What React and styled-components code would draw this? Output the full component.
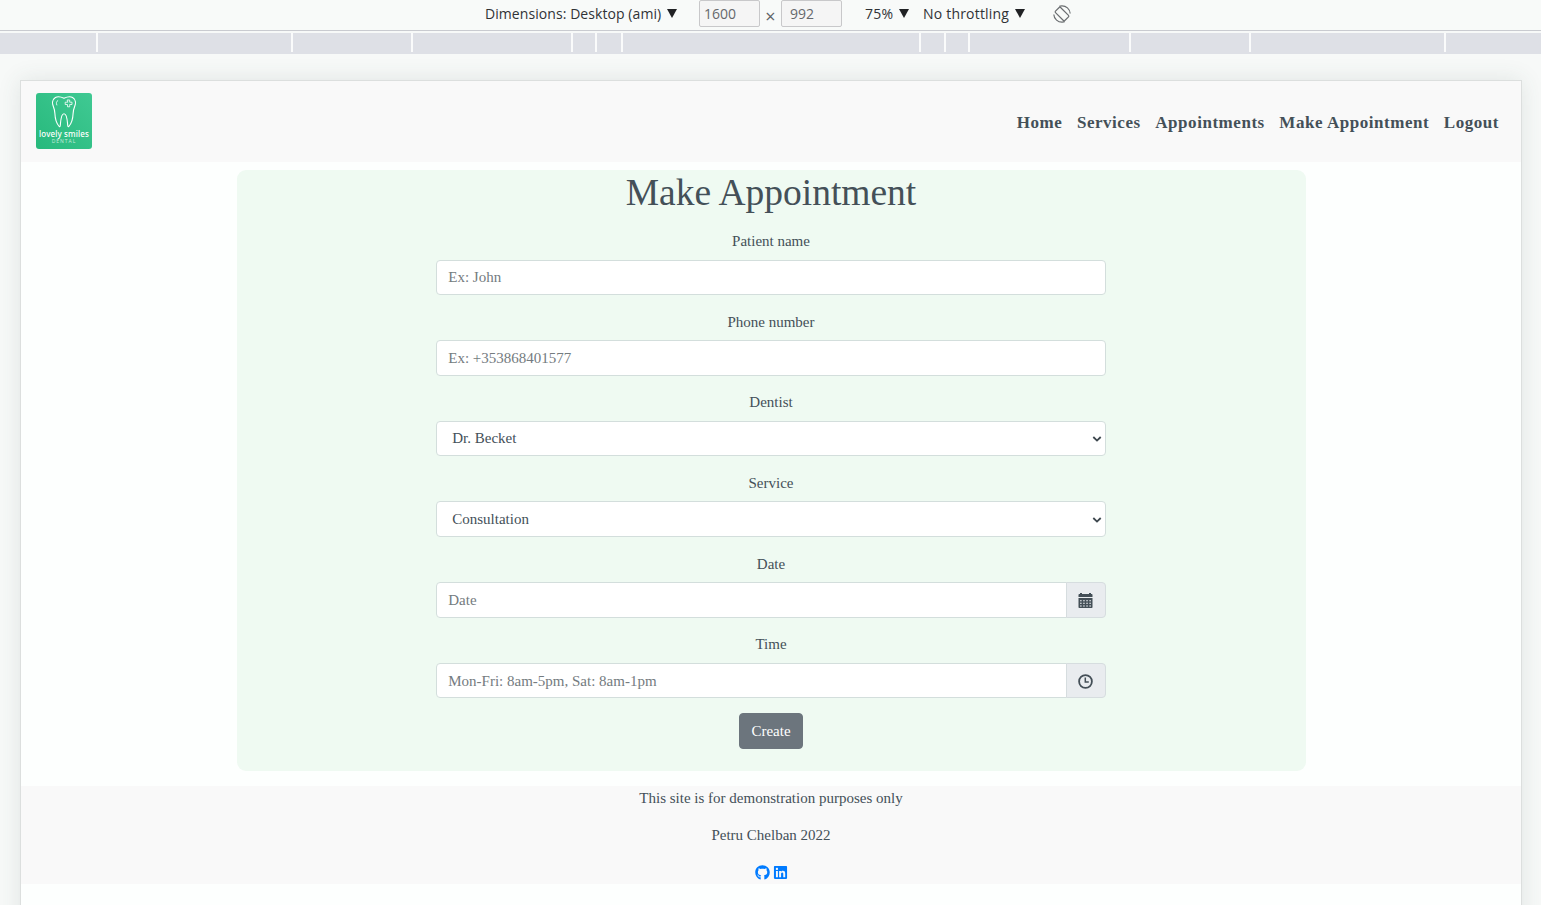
import React from "react";
import styled, { createGlobalStyle } from "styled-components";
import { FaGithub, FaLinkedin } from "react-icons/fa";

const GlobalStyle = createGlobalStyle`
  * { box-sizing: border-box; }
  html, body, #root { height: 100%; }
  body {
    margin: 0;
    overflow: hidden;
    background: #f7f9f8;
    color: #445058;
    font-family: "Liberation Serif", serif;
    font-size: 15px;
    line-height: 22.5px;
  }
`;

const Screen = styled.div`
  display: flex;
  flex-direction: column;
  height: 905px;
  overflow: hidden;
`;

const Toolbar = styled.div`
  display: flex;
  align-items: center;
  flex: none;
  height: 31px;
  padding: 0 0 3px 485px;
  border-bottom: 1px solid #c9cbd0;
  background: #f8faf9;
  color: #303236;
  font-family: "Open Sans", sans-serif;
  font-size: 14px;
  line-height: 20px;
  white-space: nowrap;
`;

const ToolText = styled.span`
  width: ${(p) => p.$width}px;
  margin-left: ${(p) => p.$before || 0}px;
  letter-spacing: ${(p) => p.$spacing || 0}px;
`;

const Caret = styled.span`
  width: 0;
  height: 0;
  margin: 0 ${(p) => p.$after}px 0 5px;
  border: solid transparent;
  border-width: 9px 5px 0;
  border-top-color: #202124;
`;

const SizeField = styled.span`
  width: 61px;
  height: 27px;
  padding: 3px 0 0 ${(p) => p.$indent}px;
  border: 1px solid #c8c8ca;
  border-radius: 2px;
  background: #f5f5f5;
  color: #66686c;
`;

const Times = styled.span`
  width: 21px;
  padding-top: 5px;
  text-align: center;
  font-size: 18px;
  color: #5f6368;
`;

const Ruler = styled.div`
  display: flex;
  flex: none;
  gap: 2px;
  height: 21px;
  margin-top: 2px;
  border-bottom: 2px solid #dee0e6;
  background: #fafbfb;
`;

const Segment = styled.span`
  flex: ${(p) => (p.$width ? `0 0 ${p.$width}px` : "1")};
  background: #dee0e6;
`;

const Viewport = styled.div`
  flex: 1;
  min-height: 0;
  padding: 26px 19px 0 20px;
`;

const Page = styled.div`
  height: 900px;
  border: 1px solid #dcdfde;
  background: #fdfffe;
  box-shadow: 0 0 22px rgba(60, 80, 70, 0.12);
`;

const Header = styled.header`
  display: flex;
  align-items: flex-start;
  justify-content: space-between;
  height: 81px;
  padding: 12px 22px 0 15px;
  background: #f9f9f9;
`;

const Logo = styled.a`
  display: flex;
  flex-direction: column;
  align-items: center;
  width: 56px;
  height: 56px;
  padding-top: 3px;
  border-radius: 3px;
  background: linear-gradient(45deg, #27b97c, #40c993);
  color: #fff;
`;

const LogoName = styled.span`
  font: 500 8px/9px "Noto Sans", sans-serif;
  letter-spacing: 0.12px;
  white-space: nowrap;
`;

const LogoSub = styled.span`
  font: 5px/7px "Open Sans", sans-serif;
  letter-spacing: 1px;
  opacity: 0.7;
`;

const Nav = styled.nav`
  display: flex;
  gap: 14.6px;
  padding-top: 19px;
`;

const NavLink = styled.a`
  font-size: 17px;
  font-weight: 700;
  letter-spacing: 0.54px;
  white-space: nowrap;
`;

const Card = styled.main`
  display: flex;
  flex-direction: column;
  align-items: center;
  width: 1069px;
  height: 601.5px;
  margin: 7.5px auto 15px;
  border-radius: 9px;
  background: #effaf2;
`;

const Title = styled.h1`
  margin: 0 0 15px;
  font-size: 37.5px;
  font-weight: 400;
  line-height: 45px;
`;

const Form = styled.form`
  display: flex;
  flex-direction: column;
  align-items: center;
  width: 669.5px;
`;

const Field = styled.div`
  width: 100%;
  margin-bottom: 15px;
  text-align: center;
`;

const Label = styled.label`
  display: block;
  padding-top: 0.5px;
  margin-bottom: 7px;
`;

const Group = styled.div`
  display: flex;
  align-items: center;
  height: 35.63px;
`;

const Input = styled.input`
  flex: 1;
  min-width: 0;
  height: 35.63px;
  padding: 1.2px 11px 0;
  border: 1px solid #d3dedc;
  border-radius: ${(p) => (p.$joined ? "4px 0 0 4px" : "4px")};
  background: #fff;
  font: inherit;
  outline: none;
  &::placeholder { color: #747b80; opacity: 1; }
`;

const Select = styled.select`
  appearance: none;
  width: 100%;
  height: 35.63px;
  padding: 0 0 0 15px;
  border: 1px solid #d3dedc;
  border-radius: 4px;
  background: #fff;
  color: #445058;
  font: inherit;
`;

const SelectArrow = styled.svg`
  flex: none;
  width: 10px;
  height: 8px;
  margin: 1px 4px 0 -14px;
  z-index: 1;
  pointer-events: none;
`;

const Addon = styled.span`
  display: flex;
  align-items: center;
  justify-content: center;
  align-self: stretch;
  width: 40px;
  margin-left: -1px;
  padding: 2px 0 0 0;
  border: 1px solid #d6dddf;
  border-radius: 0 4px 4px 0;
  background: #e9ecef;
  color: #444f57;
`;

const CreateButton = styled.button`
  height: 35.63px;
  width: 63.5px;
  padding: 0;
  border: 1px solid #6c757d;
  border-radius: 4px;
  background: #6c757d;
  color: #fff;
  font: inherit;
`;

const Footer = styled.footer`
  display: flex;
  flex-direction: column;
  align-items: center;
  gap: 14.8px;
  height: 98px;
  padding-top: 0.5px;
  background: #f9f9f9;
`;

const FooterLine = styled.p`
  margin: 0;
`;

const Socials = styled.div`
  display: flex;
  align-items: center;
  gap: 3px;
  height: 22.5px;
  color: #007bff;
`;

const RotateIcon = () => (
  <svg width="18" height="18" viewBox="0 0 18 18" fill="none" stroke="#6a6d70" strokeWidth="1.2">
    <rect x="5.4" y="2.4" width="7.2" height="13.2" rx="1" transform="rotate(-45 9 9)" />
    <path d="M8.5.8a8.200 8.200 0 0 1 8.700 7.700M9.500 17.200A8.200 8.200 0 0 1 .8 9.500M8.500.8 6.300 1.300M9.500 17.200l2.200-.5" />
  </svg>
);

const ToothIcon = () => (
  <svg width="26" height="33" viewBox="0 0 26 33" fill="none" stroke="#fff" strokeWidth="1.1" strokeLinecap="round" strokeLinejoin="round">
    <path d="M13 2.2C10.5 1 7 0 4.4 1.5 1.4 3.2 1 7 2.2 10c1 2.6 1.600 4.500 1.700 7.500.2 5 1.600 10 4.300 13 .8.4 1-.3 1.100-1.200.4-4.300.6-11.500 3.700-11.500s3.300 7.200 3.700 11.500c.1.900.3 1.600 1.100 1.200 2.700-3 4.100-8 4.300-13 .1-3 .7-4.900 1.700-7.500C25 7 24.600 3.200 21.600 1.500 19 0 15.500 1 13 2.200Z" />
    <path d="M5.800 9C5 7 5.300 5.400 6.800 4.500" strokeWidth="0.8" />
    <path d="M16.500 4h2.200v2.200h2.300v2.300h-2.300v2.300h-2.200V8.500h-2.300V6.200h2.300Z" strokeWidth="0.8" />
  </svg>
);

const Chevron = () => (
  <SelectArrow viewBox="0 0 10 8" fill="none" stroke="#3c464d" strokeWidth="1.8">
    <path d="M1.3 2 5 5.600 8.700 2" />
  </SelectArrow>
);

const CalendarIcon = () => (
  <svg width="15" height="15" viewBox="0 0 15 15" fill="currentColor">
    <path d="M.5 4V2c0-.6.4-1 1-1H2V0h2v1h7V0h2v1h.5c.6 0 1 .4 1 1v2Z" />
    <path
      fillRule="evenodd"
      d="M.5 5h14v9.200c0 .5-.3.800-.8.800H1.300c-.5 0-.8-.3-.8-.8ZM2 7.200v1h1.700v-1Zm3.100 0v1h1.700v-1Zm3.100 0v1h1.700v-1Zm3.100 0v1h1.700v-1ZM2 9.800v1h1.700v-1Zm3.100 0v1h1.700v-1Zm3.100 0v1h1.700v-1Zm3.100 0v1h1.700v-1ZM2 12.400v1h1.700v-1Zm3.100 0v1h1.700v-1Zm3.100 0v1h1.700v-1Zm3.100 0v1h1.700v-1Z"
    />
  </svg>
);

const ClockIcon = () => (
  <svg width="15" height="15" viewBox="0 0 15 15" fill="none" stroke="currentColor">
    <circle cx="7.5" cy="7.500" r="6.400" strokeWidth="1.800" />
    <path d="M7.300 3.600v4.500H10.800" strokeWidth="1.500" />
  </svg>
);

const segments = [96, 193, 118, 158, 22, 24, 296, 23, 22, 159, 118, 193, 0];
const links = ["Home", "Services", "Appointments", "Make Appointment", "Logout"];

export default function App() {
  return (
    <Screen>
      <GlobalStyle />
      <Toolbar>
        <ToolText $width={177} $spacing={0.07}>Dimensions: Desktop (ami)</ToolText>
        <Caret $after={22} />
        <SizeField $indent={4}>1600</SizeField>
        <Times>×</Times>
        <SizeField $indent={8}>992</SizeField>
        <ToolText $width={29} $before={23} $spacing={0.2}>75%</ToolText>
        <Caret $after={14} />
        <ToolText $width={87} $spacing={0.2}>No throttling</ToolText>
        <Caret $after={28} />
        <RotateIcon />
      </Toolbar>
      <Ruler>
        {segments.map((w, i) => (
          <Segment key={i} $width={w} />
        ))}
      </Ruler>
      <Viewport>
        <Page>
          <Header>
            <Logo>
              <ToothIcon />
              <LogoName>lovely smiles</LogoName>
              <LogoSub>DENTAL</LogoSub>
            </Logo>
            <Nav>
              {links.map((l) => (
                <NavLink key={l}>{l}</NavLink>
              ))}
            </Nav>
          </Header>
          <Card>
            <Title>Make Appointment</Title>
            <Form>
              <Field>
                <Label>Patient name</Label>
                <Group><Input placeholder="Ex: John" /></Group>
              </Field>
              <Field>
                <Label>Phone number</Label>
                <Group><Input placeholder="Ex: +353868401577" /></Group>
              </Field>
              <Field>
                <Label>Dentist</Label>
                <Group>
                  <Select><option>Dr. Becket</option></Select>
                  <Chevron />
                </Group>
              </Field>
              <Field>
                <Label>Service</Label>
                <Group>
                  <Select><option>Consultation</option></Select>
                  <Chevron />
                </Group>
              </Field>
              <Field>
                <Label>Date</Label>
                <Group>
                  <Input $joined placeholder="Date" />
                  <Addon><CalendarIcon /></Addon>
                </Group>
              </Field>
              <Field>
                <Label>Time</Label>
                <Group>
                  <Input $joined placeholder="Mon-Fri: 8am-5pm, Sat: 8am-1pm" />
                  <Addon><ClockIcon /></Addon>
                </Group>
              </Field>
              <CreateButton type="button">Create</CreateButton>
            </Form>
          </Card>
          <Footer>
            <FooterLine>This site is for demonstration purposes only</FooterLine>
            <FooterLine>Petru Chelban 2022</FooterLine>
            <Socials>
              <FaGithub size={15} />
              <FaLinkedin size={15} />
            </Socials>
          </Footer>
        </Page>
      </Viewport>
    </Screen>
  );
}
